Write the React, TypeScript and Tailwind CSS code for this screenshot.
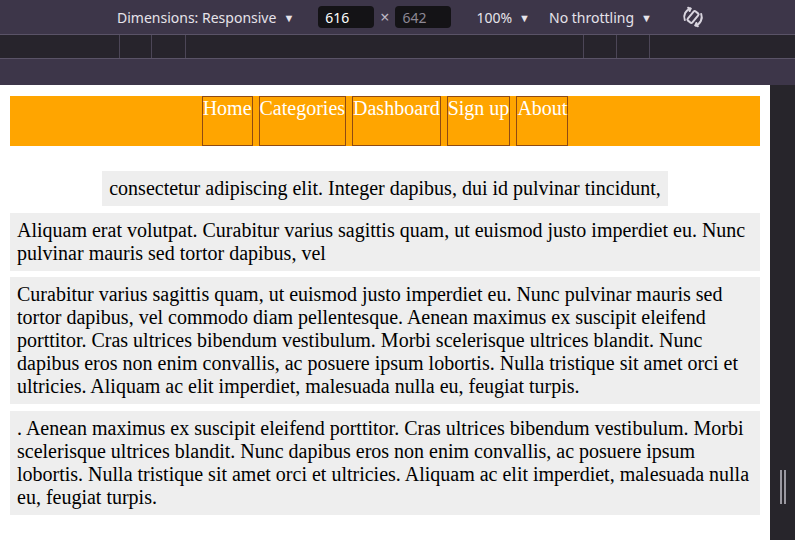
const NAV_LINKS = ["Home", "Categories", "Dashboard", "Sign up", "About"];

const PARAGRAPHS = [
  "Aliquam erat volutpat. Curabitur varius sagittis quam, ut euismod justo imperdiet eu. Nunc pulvinar mauris sed tortor dapibus, vel",
  "Curabitur varius sagittis quam, ut euismod justo imperdiet eu. Nunc pulvinar mauris sed tortor dapibus, vel commodo diam pellentesque. Aenean maximus ex suscipit eleifend porttitor. Cras ultrices bibendum vestibulum. Morbi scelerisque ultrices blandit. Nunc dapibus eros non enim convallis, ac posuere ipsum lobortis. Nulla tristique sit amet orci et ultricies. Aliquam ac elit imperdiet, malesuada nulla eu, feugiat turpis.",
  ". Aenean maximus ex suscipit eleifend porttitor. Cras ultrices bibendum vestibulum. Morbi scelerisque ultrices blandit. Nunc dapibus eros non enim convallis, ac posuere ipsum lobortis. Nulla tristique sit amet orci et ultricies. Aliquam ac elit imperdiet, malesuada nulla eu, feugiat turpis."
];

function Caret() {
  return <span className="ml-[7px] inline-block text-[11px] leading-none">▼</span>;
}

function RotateIcon() {
  return (
    <svg width="24" height="24" viewBox="0 0 24 24" fill="none" stroke="#d8d4de" strokeWidth="2" strokeLinecap="round" strokeLinejoin="round">
      <g transform="rotate(40 12 12)">
        <rect x="9" y="6" width="6" height="12" rx="1.5" />
      </g>
      <path d="M3.8 15 A8.6 8.6 0 0 1 9.6 3.6" />
      <path d="M20.2 9 A8.6 8.6 0 0 1 14.4 20.4" />
      <path d="M9.6 3.6 L7.1 2.8 M9.6 3.6 L8.6 6" />
      <path d="M14.4 20.4 L16.9 21.2 M14.4 20.4 L15.4 18" />
    </svg>
  );
}

function DeviceToolbar() {
  return (
    <div className="flex h-[34px] items-center bg-[#3d3649] font-['Noto_Sans',sans-serif] text-[14px] text-[#e6e3ea]">
      <div className="ml-[117px] flex items-center">
        Dimensions: Responsive
        <Caret />
      </div>
      <div className="ml-[24px] flex h-[22px] w-[56px] items-center rounded-[4px] bg-[#141316] pl-[7px] text-white">616</div>
      <span className="mx-[6px] text-[16px] text-[#bdb8c4]">×</span>
      <div className="flex h-[22px] w-[56px] items-center rounded-[4px] bg-[#141316] pl-[7px] text-[#8d8894]">642</div>
      <div className="ml-[25px] flex items-center">
        100%
        <Caret />
      </div>
      <div className="ml-[19px] flex items-center">
        No throttling
        <Caret />
      </div>
      <div className="ml-[29px] flex items-center">
        <RotateIcon />
      </div>
    </div>
  );
}

function Ruler() {
  return (
    <div className="flex h-[25px] border-y border-[#5a5367] bg-[#27242c]">
      <div className="ml-[119px] w-[33px] border-x border-[#4c4657]" />
      <div className="w-[34px] border-r border-[#4c4657]" />
      <div className="ml-[397px] w-[34px] border-x border-[#4c4657]" />
      <div className="w-[33px] border-r border-[#4c4657]" />
    </div>
  );
}

export default function App() {
  return (
    <div className="flex h-[540px] w-[795px] flex-col overflow-hidden bg-[#3d3649]">
      <DeviceToolbar />
      <Ruler />
      <div className="h-[26px] shrink-0 bg-[#3d3649]" />
      <div className="flex flex-1 overflow-hidden">
        <div className="flex-1 bg-white px-[10px] pt-[11px] font-['Liberation_Serif','Times_New_Roman',serif] text-[20px] leading-[23px] text-black">
          <nav className="flex h-[50px] justify-center gap-[6px] bg-[#ffa500]">
            {NAV_LINKS.map((label) => (
              <a key={label} href="#" className="block border border-[#8f4a13] text-white">
                {label}
              </a>
            ))}
          </nav>
          <div className="mt-[25px] flex justify-center">
            <p className="bg-[#eeeeee] px-[7px] py-[6px]">
              consectetur adipiscing elit. Integer dapibus, dui id pulvinar tincidunt,
            </p>
          </div>
          {PARAGRAPHS.map((text, i) => (
            <p key={i} className="mt-[6.5px] bg-[#eeeeee] px-[7px] py-[6px]">
              {text}
            </p>
          ))}
        </div>
        <div className="relative w-[25px] bg-[#27252b]">
          <div className="absolute left-[10px] top-[385px] h-[34px] w-[2px] bg-[#9a98a0]" />
          <div className="absolute left-[14px] top-[385px] h-[34px] w-[2px] bg-[#9a98a0]" />
        </div>
      </div>
    </div>
  );
}
